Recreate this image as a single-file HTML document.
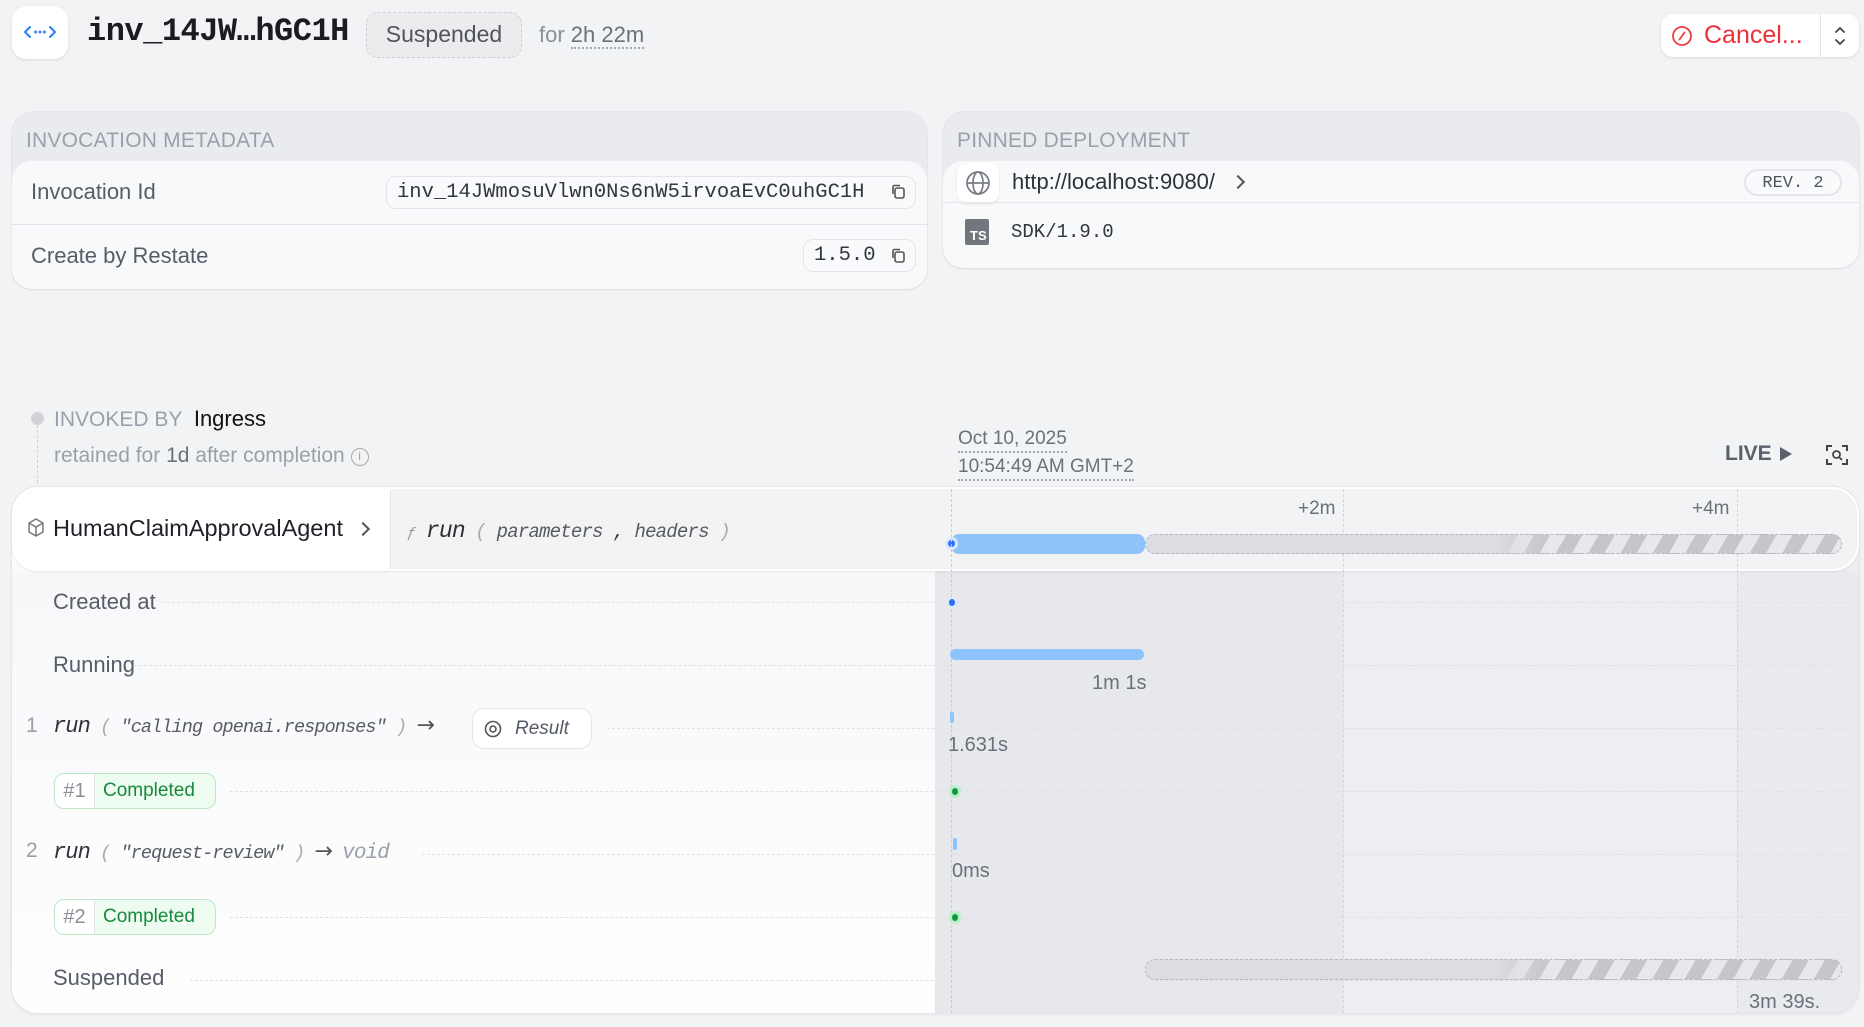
<!DOCTYPE html>
<html><head><meta charset="utf-8">
<style>
*{box-sizing:border-box;margin:0;padding:0}
body{width:1864px;height:1027px;background:#f2f3f5;font-family:"Liberation Sans",sans-serif;color:#4b5060;position:relative;overflow:hidden}
.a{position:absolute}
.mono{font-family:"Liberation Mono",monospace}
.card{border-radius:22px;background:#eaebef;box-shadow:0 0 0 1px #e4e5e9}
.inner{background:#f8f9fb;border-radius:20px;box-shadow:0 1px 2px rgba(0,0,0,.08),0 0 0 1px #eceef1}
.pill{border:1px solid #e3e5e9;border-radius:10px;background:#f9fafb}
.hd{font-size:21px;color:#9aa0ab;letter-spacing:.2px}
.lbl{font-size:22px;color:#575c68}
.dash{border-top:1px dashed #dfe1e5}
.cmp{display:flex;border:1px solid #b9e8c7;border-radius:10px;overflow:hidden;height:36px;background:#eefbf1}
.cmp span:first-child{background:#fff;color:#8a8f99;width:40px;text-align:center;border-right:1px solid #e3e5e9;line-height:34px;font-size:20px}
.cmp span:last-child{color:#178a3c;line-height:34px;padding:0 12px 0 8px;font-size:19px}
.stripe{border:1.5px dashed #b5b8be;border-radius:10px;background:linear-gradient(90deg,#dcdde1 0,#dcdde1 50%,rgba(220,221,225,0) 58%),repeating-linear-gradient(120deg,#c4c6cb 0 14px,#e7e8eb 14px 28px)}
.chev{display:inline-block;width:10px;height:10px;border-right:2.2px solid #555;border-top:2.2px solid #555;transform:rotate(45deg);vertical-align:2px}
</style></head><body>

<!-- header -->
<div class="a" style="left:12px;top:6px;width:56px;height:53px;background:#fff;border-radius:14px;box-shadow:0 1px 3px rgba(0,0,0,.1)">
<svg width="56" height="53" viewBox="0 0 56 53"><path d="M18 21l-5 5 5 5M38 21l5 5-5 5" fill="none" stroke="#3b82f6" stroke-width="2.2" stroke-linecap="round" stroke-linejoin="round"/><circle cx="23.5" cy="26" r="1.5" fill="#3b82f6"/><circle cx="28" cy="26" r="1.5" fill="#3b82f6"/><circle cx="32.5" cy="26" r="1.5" fill="#3b82f6"/></svg></div>
<div class="a mono" style="left:87px;top:13px;font-size:32px;font-weight:bold;color:#1a1c22;letter-spacing:-0.5px">inv_14JW…hGC1H</div>
<div class="a" style="left:366px;top:12px;width:156px;height:46px;border:1.5px dashed #cfd1d6;border-radius:12px;background:#ececee;font-size:23px;color:#50545e;text-align:center;line-height:43px">Suspended</div>
<div class="a" style="left:539px;top:22px;font-size:22px;color:#8a8f99">for <span style="color:#6b707b;border-bottom:2px dotted #a3a7b0">2h 22m</span></div>
<div class="a" style="left:1661px;top:14px;width:198px;height:43px;background:#fff;border-radius:12px;box-shadow:0 1px 3px rgba(0,0,0,.1)">
<svg class="a" style="left:10px;top:11px" width="22" height="22" viewBox="0 0 22 22"><circle cx="11" cy="11" r="9" fill="none" stroke="#ef3c3c" stroke-width="1.8"/><path d="M13.5 7.5l-5 7" stroke="#ef3c3c" stroke-width="1.8" stroke-linecap="round"/></svg>
<div class="a" style="left:43px;top:7px;font-size:25px;color:#ef2f3a">Cancel...</div>
<div class="a" style="left:159px;top:0;width:1px;height:43px;background:#e6e7ea"></div>
<svg class="a" style="left:170px;top:10px" width="18" height="24" viewBox="0 0 18 24"><path d="M5 8l4-4 4 4M5 16l4 4 4-4" fill="none" stroke="#444" stroke-width="1.8" stroke-linecap="round"/></svg>
</div>

<!-- metadata card -->
<div class="a card" style="left:12px;top:112px;width:915px;height:177px">
<div class="a hd" style="left:14px;top:17px">INVOCATION METADATA</div>
<div class="a inner" style="left:0;top:49px;width:915px;height:128px">
<div class="a lbl" style="left:19px;top:18px">Invocation Id</div>
<div class="a pill mono" style="left:374px;top:15px;width:530px;height:33px;font-size:20.5px;color:#33363e;line-height:31px;padding-left:10px">inv_14JWmosuVlwn0Ns6nW5irvoaEvC0uhGC1H</div>
<div class="a" style="left:0;top:63px;width:915px;height:1px;background:#e3e5e9"></div>
<div class="a lbl" style="left:19px;top:82px">Create by Restate</div>
<div class="a pill mono" style="left:791px;top:78px;width:113px;height:33px;font-size:20.5px;color:#33363e;line-height:31px;padding-left:10px">1.5.0</div>
</div></div>
<svg class="a" style="left:890px;top:183px" width="18" height="18" viewBox="0 0 18 18"><rect x="5" y="5" width="9" height="10" rx="2" fill="none" stroke="#555" stroke-width="1.6"/><path d="M3 11V4a1.5 1.5 0 0 1 1.5-1.5H10" fill="none" stroke="#555" stroke-width="1.6"/></svg>
<svg class="a" style="left:890px;top:247px" width="18" height="18" viewBox="0 0 18 18"><rect x="5" y="5" width="9" height="10" rx="2" fill="none" stroke="#555" stroke-width="1.6"/><path d="M3 11V4a1.5 1.5 0 0 1 1.5-1.5H10" fill="none" stroke="#555" stroke-width="1.6"/></svg>

<!-- pinned deployment -->
<div class="a card" style="left:943px;top:112px;width:916px;height:156px">
<div class="a hd" style="left:14px;top:17px">PINNED DEPLOYMENT</div>
<div class="a inner" style="left:0;top:49px;width:916px;height:107px">
<div class="a" style="left:14px;top:2px;width:42px;height:40px;background:#fff;border-radius:10px;box-shadow:0 1px 2px rgba(0,0,0,.1)">
<svg width="42" height="40" viewBox="0 0 42 40"><circle cx="21" cy="20" r="11" fill="none" stroke="#777b85" stroke-width="1.7"/><ellipse cx="21" cy="20" rx="5" ry="11" fill="none" stroke="#777b85" stroke-width="1.7"/><path d="M10 20h22" stroke="#777b85" stroke-width="1.7"/></svg></div>
<div class="a" style="left:69px;top:8px;font-size:22px;color:#2e3139">http://localhost:9080/ <span class="chev" style="margin-left:12px"></span></div>
<div class="a pill mono" style="left:801px;top:8px;width:98px;height:27px;font-size:17px;line-height:25px;text-align:center;color:#50545e;border-radius:14px;border-width:2px">REV. 2</div>
<div class="a" style="left:0;top:41px;width:916px;height:1px;background:#e3e5e9"></div>
<div class="a" style="left:22px;top:58px;width:24px;height:26px;background:#72767f;border-radius:2px;color:#fff;font-size:13px;font-weight:bold;padding:9px 0 0 5px">TS</div>
<div class="a mono" style="left:68px;top:60px;font-size:19px;color:#33363e">SDK/1.9.0</div>
</div></div>

<!-- invoked by -->
<div class="a" style="left:31px;top:412px;width:13px;height:13px;border-radius:50%;background:#d1d3d8"></div>
<div class="a" style="left:37px;top:425px;height:58px;border-left:1px dashed #cfd1d6"></div>
<div class="a" style="left:54px;top:406px;font-size:21px;color:#9aa0ab">INVOKED BY <span style="color:#111;font-size:22px;margin-left:6px">Ingress</span></div>
<div class="a" style="left:54px;top:444px;font-size:21px;color:#9aa0ab">retained for <span style="color:#6b707b">1d</span> after completion <span style="display:inline-block;width:18px;height:18px;border:1.5px solid #aaa;border-radius:50%;font-size:12px;text-align:center;line-height:15px;vertical-align:2px">i</span></div>

<!-- timeline header -->
<div class="a" style="left:958px;top:427px;font-size:19px;color:#6b707b;border-bottom:2px dotted #a3a7b0;line-height:24px">Oct 10, 2025</div>
<div class="a" style="left:958px;top:455px;font-size:19px;color:#6b707b;border-bottom:2px dotted #a3a7b0;line-height:24px">10:54:49 AM GMT+2</div>
<div class="a" style="left:1725px;top:442px;font-size:21px;font-weight:bold;color:#5b606b">LIVE</div>
<svg class="a" style="left:1779px;top:446px" width="14" height="16" viewBox="0 0 14 16"><path d="M1 1l12 7-12 7z" fill="#5b606b"/></svg>
<svg class="a" style="left:1825px;top:443px" width="24" height="24" viewBox="0 0 24 24"><path d="M2 8V3h5M17 3h5v5M22 16v5h-5M7 21H2v-5" fill="none" stroke="#444" stroke-width="2"/><circle cx="11.5" cy="11.5" r="3.5" fill="none" stroke="#444" stroke-width="1.8"/><path d="M14 14l3 3" stroke="#444" stroke-width="1.8"/></svg>

<!-- main card -->
<div class="a" style="left:12px;top:487px;width:1847px;height:526px;border-radius:26px;overflow:hidden;background:#fbfbfc;box-shadow:0 0 0 1px #e4e5e9,0 2px 3px rgba(0,0,0,.06)">
 <div class="a" style="left:0;top:84px;width:923px;height:442px;background:linear-gradient(#f7f8fa,#fefefe)"></div>
 <div class="a" style="left:923px;top:0;width:924px;height:526px;background:#eceef1"></div>
 <div class="a" style="left:923px;top:84px;width:408px;height:442px;background:#e7e8ec"></div>
 <div class="a" style="left:1725px;top:84px;width:122px;height:442px;background:#e9eaee"></div>
 <!-- top row -->
 <div class="a" style="left:0;top:0;width:1847px;height:84px;background:#fff;border-radius:26px;box-shadow:0 1px 2px rgba(0,0,0,.08)"></div>
 <div class="a" style="left:378px;top:2px;width:545px;height:80px;background:#f3f3f4;border-left:1px solid #e3e5e9"></div>
 <div class="a" style="left:923px;top:2px;width:922px;height:80px;background:#f2f3f5;border-radius:0 24px 24px 0"></div>
 <svg class="a" style="left:14px;top:30px" width="20" height="22" viewBox="0 0 20 22"><path d="M10 2l7 4v9l-7 4-7-4V6z M3 6l7 4 7-4 M10 10v9" fill="none" stroke="#777" stroke-width="1.5" stroke-linejoin="round"/></svg>
 <div class="a" style="left:41px;top:28px;font-size:23.5px;color:#1f2128">HumanClaimApprovalAgent <span class="chev" style="margin-left:8px"></span></div>
 <div class="a mono" style="left:395px;top:31px;font-size:19px;font-style:italic;color:#555b66;letter-spacing:-0.8px"><span style="font-size:15px;color:#999">ƒ</span> <span style="font-size:23px;color:#2e3139">run</span><span style="color:#aaa"> ( </span>parameters <span style="color:#333">,</span> headers<span style="color:#aaa"> )</span></div>
 <div class="a" style="left:1331px;top:2px;height:524px;border-left:1px dashed #d3d5da"></div>
 <div class="a" style="left:1725px;top:2px;height:524px;border-left:1px dashed #d3d5da"></div>
 <div class="a" style="left:1286px;top:11px;font-size:19px;color:#6b707b">+2m</div>
 <div class="a" style="left:1680px;top:11px;font-size:19px;color:#6b707b">+4m</div>
 <div class="a" style="left:939px;top:47px;width:194px;height:20px;border-radius:8px;background:#8ec3fc"></div>
 <div class="a stripe" style="left:1133px;top:47px;width:697px;height:20px"></div>
 <div class="a" style="left:933px;top:50px;width:13px;height:13px;border-radius:50%;background:#2f6ff0;border:3px solid #dbe8ff"></div>

 <!-- rows -->
 <div class="a lbl" style="left:41px;top:102px">Created at</div>
 <div class="a dash" style="left:150px;top:115px;width:1697px"></div>
 <div class="a lbl" style="left:41px;top:165px">Running</div>
 <div class="a dash" style="left:122px;top:178px;width:1697px"></div>
 <div class="a" style="left:14px;top:227px;font-size:21px;color:#9aa0ab">1</div>
 <div class="a mono" style="left:41px;top:226px;font-size:18.5px;font-style:italic;color:#555b66;letter-spacing:-0.9px"><span style="font-size:22px;color:#2e3139">run</span><span style="color:#aaa"> ( </span>"calling openai.responses"<span style="color:#aaa"> )</span> <span style="font-style:normal;color:#555;font-size:22px;font-family:'DejaVu Sans'">→</span></div>
 <div class="a" style="left:460px;top:221px;width:120px;height:41px;background:#fff;border:1px solid #e3e5e9;border-radius:12px;font-size:19px;font-style:italic;color:#555b66;line-height:39px;padding-left:42px">Result</div>
 <svg class="a" style="left:471px;top:232px" width="20" height="20" viewBox="0 0 20 20"><circle cx="10" cy="10" r="7.5" fill="none" stroke="#555" stroke-width="1.6"/><circle cx="10" cy="10" r="3" fill="none" stroke="#555" stroke-width="1.6"/></svg>
 <div class="a dash" style="left:595px;top:241px;width:1252px"></div>
 <div class="a cmp" style="left:42px;top:286px;width:162px"><span>#1</span><span>Completed</span></div>
 <div class="a dash" style="left:218px;top:304px;width:1629px"></div>
 <div class="a" style="left:14px;top:352px;font-size:21px;color:#9aa0ab">2</div>
 <div class="a mono" style="left:41px;top:352px;font-size:18.5px;font-style:italic;color:#555b66;letter-spacing:-0.9px"><span style="font-size:22px;color:#2e3139">run</span><span style="color:#aaa"> ( </span>"request-review"<span style="color:#aaa"> )</span> <span style="font-style:normal;color:#555;font-size:22px;font-family:'DejaVu Sans'">→</span> <span style="color:#9aa0ab;font-size:21px">void</span></div>
 <div class="a dash" style="left:410px;top:367px;width:1437px"></div>
 <div class="a cmp" style="left:42px;top:412px;width:162px"><span>#2</span><span>Completed</span></div>
 <div class="a dash" style="left:218px;top:430px;width:1629px"></div>
 <div class="a lbl" style="left:41px;top:478px">Suspended</div>
 <div class="a dash" style="left:178px;top:493px;width:1669px"></div>

 <!-- timeline items -->
 <div class="a" style="left:939px;top:2px;height:524px;border-left:1px dashed #c9cbd0"></div>
 <div class="a" style="left:935px;top:110px;width:10px;height:11px;border-radius:50%;background:#2f6ff0;border:2px solid #dbe8ff"></div>
 <div class="a" style="left:938px;top:162px;width:194px;height:11px;border-radius:6px;background:#8ec3fc"></div>
 <div class="a" style="left:1080px;top:185px;font-size:20px;color:#6b707b">1m 1s</div>
 <div class="a" style="left:938px;top:225px;width:4px;height:11px;border-radius:2px;background:#8ec3fc"></div>
 <div class="a" style="left:936px;top:247px;font-size:20px;color:#6b707b">1.631s</div>
 <div class="a" style="left:937px;top:298px;width:12px;height:13px;border-radius:50%;background:#0e9a43;border:3px solid #b8f0c8"></div>
 <div class="a" style="left:941px;top:351px;width:4px;height:12px;border-radius:2px;background:#8ec3fc"></div>
 <div class="a" style="left:940px;top:373px;font-size:20px;color:#6b707b">0ms</div>
 <div class="a" style="left:937px;top:424px;width:12px;height:13px;border-radius:50%;background:#0e9a43;border:3px solid #b8f0c8"></div>
 <div class="a stripe" style="left:1133px;top:472px;width:697px;height:21px"></div>
 <div class="a" style="left:1737px;top:504px;font-size:20px;color:#6b707b">3m 39s.</div>
</div>
</body></html>
